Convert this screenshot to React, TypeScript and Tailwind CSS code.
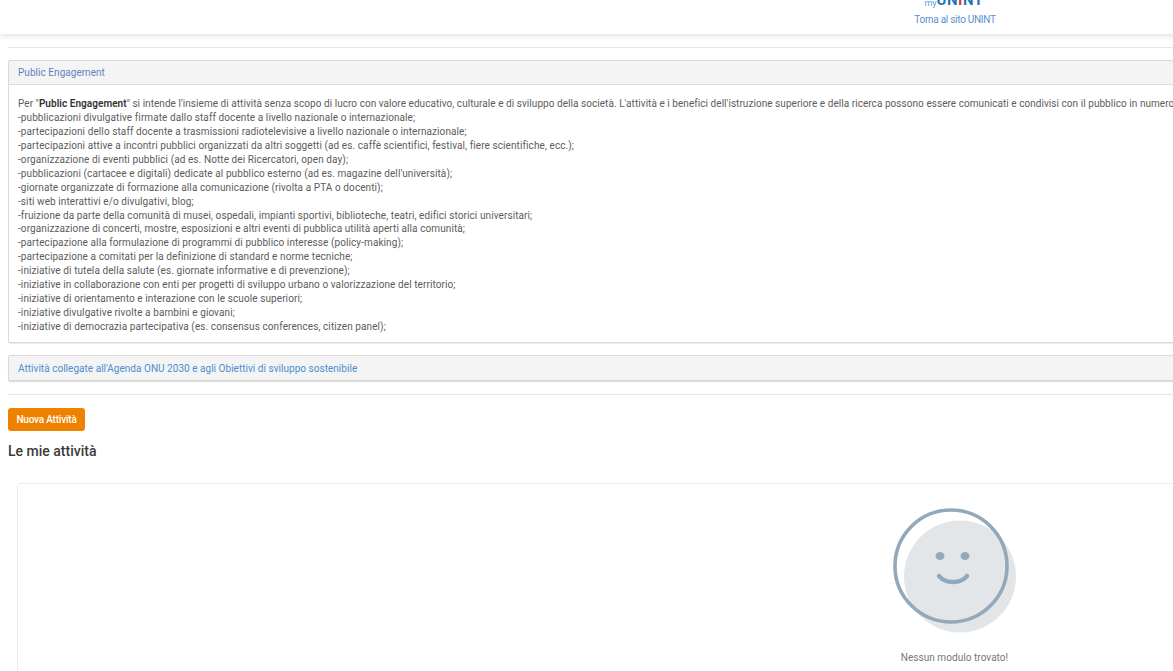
import React from "react";

const lines = [
  "-pubblicazioni divulgative firmate dallo staff docente a livello nazionale o internazionale;",
  "-partecipazioni dello staff docente a trasmissioni radiotelevisive a livello nazionale o internazionale;",
  "-partecipazioni attive a incontri pubblici organizzati da altri soggetti (ad es. caffè scientifici, festival, fiere scientifiche, ecc.);",
  "-organizzazione di eventi pubblici (ad es. Notte dei Ricercatori, open day);",
  "-pubblicazioni (cartacee e digitali) dedicate al pubblico esterno (ad es. magazine dell'università);",
  "-giornate organizzate di formazione alla comunicazione (rivolta a PTA o docenti);",
  "-siti web interattivi e/o divulgativi, blog;",
  "-fruizione da parte della comunità di musei, ospedali, impianti sportivi, biblioteche, teatri, edifici storici universitari;",
  "-organizzazione di concerti, mostre, esposizioni e altri eventi di pubblica utilità aperti alla comunità;",
  "-partecipazione alla formulazione di programmi di pubblico interesse (policy-making);",
  "-partecipazione a comitati per la definizione di standard e norme tecniche;",
  "-iniziative di tutela della salute (es. giornate informative e di prevenzione);",
  "-iniziative in collaborazione con enti per progetti di sviluppo urbano o valorizzazione del territorio;",
  "-iniziative di orientamento e interazione con le scuole superiori;",
  "-iniziative divulgative rivolte a bambini e giovani;",
  "-iniziative di democrazia partecipativa (es. consensus conferences, citizen panel);",
];

const Smiley = () => (
  <svg width="124" height="126" viewBox="0 0 124 126" className="mr-[3px] block">
    <circle cx="67" cy="68.5" r="56" fill="#e3e6e8" />
    <circle cx="58" cy="58" r="56" fill="none" stroke="#93a9ba" strokeWidth="3.6" />
    <ellipse cx="47" cy="48" rx="4.5" ry="4" fill="#93a9ba" />
    <ellipse cx="72" cy="48" rx="4.5" ry="4" fill="#93a9ba" />
    <path d="M46 68 C52 76 68 76 74 68" fill="none" stroke="#93a9ba" strokeWidth="4.5" strokeLinecap="round" />
  </svg>
);

export default function App() {
  return (
    <div className="h-[671px] w-[1173px] overflow-hidden bg-white font-['Roboto',sans-serif] text-[10px] text-[#5c5c5c]">
      <div className="w-[1904px]">
        {/* Header */}
        <div className="flex h-[34px] flex-col items-center overflow-hidden bg-white pl-[6px] shadow-[0_2px_6px_rgba(0,0,0,0.12)]">
          <div className="-mt-[7px] mr-[2px] flex h-[15px] items-end leading-none">
            <span className="text-[9px] text-[#5b9bd5]">my</span>
            <span className="text-[15px] font-bold tracking-[0.5px] text-[#2273b9]">
              UN<span className="text-[#d8363f]">I</span>NT
            </span>
          </div>
          <a className="mt-[6px] text-[10px] leading-[12px] tracking-[-0.27px] text-[#5b8fd0]">Torna al sito UNINT</a>
        </div>

        <div className="px-2">
          <hr className="mt-[13px] border-[#e6e6e6]" />

          <div className="mt-3 rounded-[2px] border border-[#d9d9d9] shadow-[0_1px_1px_rgba(0,0,0,0.08)]">
            <div className="flex h-[24px] items-center border-b border-[#dcdcdc] bg-[#f4f4f4] px-[9px] tracking-[0.05px] text-[#6083ba]">
              Public Engagement
            </div>
            <div className="h-[257px] whitespace-nowrap px-[9px] pt-[12px] leading-[13.94px] tracking-[0.09px]">
              <div className="tracking-[0.05px]">
                Per "<b className="font-semibold text-[#333]">Public Engagement</b>" si intende l'insieme di attività senza scopo di lucro con valore educativo, culturale e di sviluppo della società. L'attività e i benefici dell'istruzione superiore e della ricerca possono essere comunicati e condivisi con il pubblico in numerosi modi:
              </div>
              {lines.map((line) => (
                <div key={line}>{line}</div>
              ))}
            </div>
          </div>

          <div className="mt-3 flex h-[26px] items-center rounded-[2px] border border-[#d9d9d9] bg-[#f4f4f4] px-[9px] tracking-[0.03px] text-[#4a8fd0] shadow-[0_1px_1px_rgba(0,0,0,0.15)]">
            Attività collegate all'Agenda ONU 2030 e agli Obiettivi di sviluppo sostenibile
          </div>

          <hr className="mt-[13px] border-[#e6e6e6]" />

          <button className="mt-[13px] block h-[23px] w-[77px] rounded-[3px] bg-[#ee8100] text-[10px] font-medium tracking-[-0.2px] text-white">
            Nuova Attività
          </button>

          <h2 className="mt-[12px] text-[14px] leading-[17px] font-medium text-[#3a3a3a]">Le mie attività</h2>

          <div className="mt-[23px] ml-[9px] flex h-[300px] flex-col items-center rounded-[3px] border border-[#ececec] pt-[24px]">
            <Smiley />
            <p className="mt-[16px] pr-[4px] tracking-[0.05px] text-[#777]">Nessun modulo trovato!</p>
          </div>
        </div>
      </div>
    </div>
  );
}
